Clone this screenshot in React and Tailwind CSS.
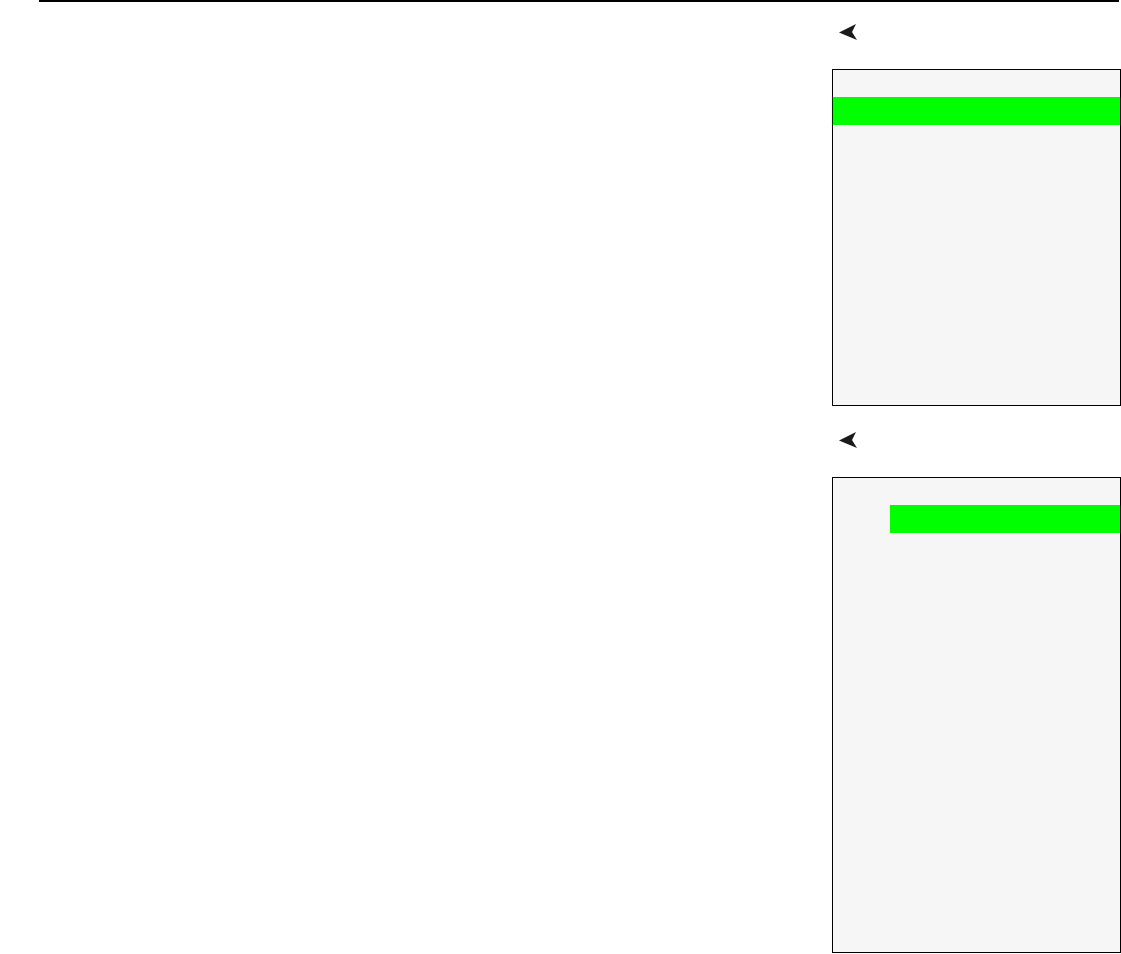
import React from 'react';

const Arrow = () => (
  <svg width="19" height="16" viewBox="0 0 19 16" className="block">
    <path d="M0 8.5 L17 0 L13 8 L18 16 Z" fill="#1a1a1a" />
  </svg>
);

const Panel = ({ height, children }) => (
  <div className={`border border-black bg-[#f6f6f6] ${height}`}>{children}</div>
);

export default function App() {
  return (
    <div className="w-[1121px] h-[954px] bg-white overflow-hidden font-['Liberation_Sans',sans-serif]">
      <div className="ml-[39px] mr-[2px] border-t-2 border-black" />
      <div className="flex justify-end">
        <div className="w-[289px] flex flex-col">
          {/* first section */}
          <div className="mt-[22px] pl-[7px] h-[15px] flex items-center">
            <Arrow />
          </div>
          <div className="mt-[30px]">
            <Panel height="h-[337px]">
              <div className="h-[27px]" />
              <div className="h-[28px] bg-[#00ff00]" />
            </Panel>
          </div>
          {/* second section */}
          <div className="mt-[26px] pl-[7px] h-[15px] flex items-center">
            <Arrow />
          </div>
          <div className="mt-[30px]">
            <Panel height="h-[476px]">
              <div className="h-[27px]" />
              <div className="ml-[57px] h-[28px] bg-[#00ff00]" />
            </Panel>
          </div>
        </div>
      </div>
    </div>
  );
}
